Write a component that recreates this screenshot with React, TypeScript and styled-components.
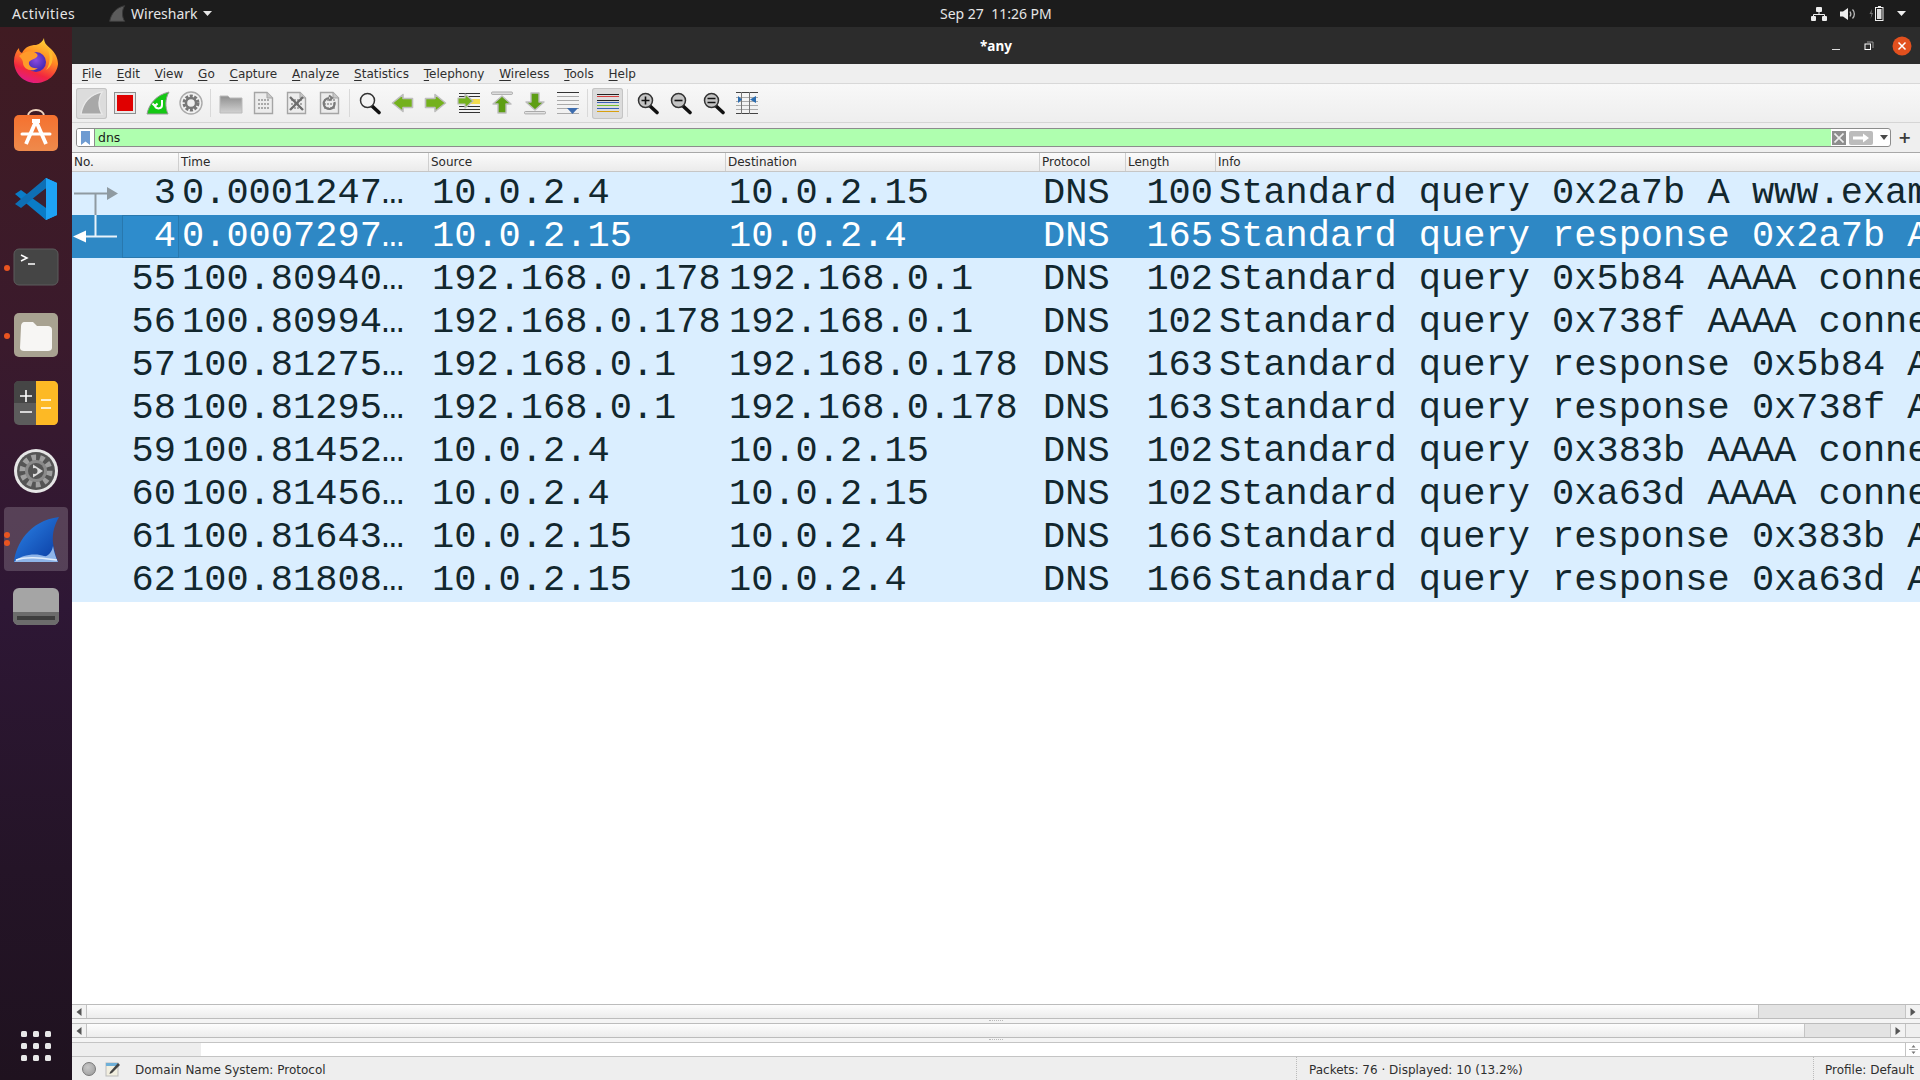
import React from "react";
import styled, { createGlobalStyle } from "styled-components";

const Global = createGlobalStyle`
  html, body { margin: 0; padding: 0; width: 1920px; height: 1080px; overflow: hidden; background: #fff; }
  * { box-sizing: border-box; }
`;
const Screen = styled.div`
  width: 1920px; height: 1080px; display: flex; flex-direction: column; overflow: hidden;
`;
const TopBar = styled.header`
  height: 27px; flex: none; background: #1c1c1c; color: #e6e6e6; display: grid; grid-template-columns: 940px auto 1fr;
  align-items: center; font: 14px "Noto Sans", sans-serif;
`;
const TopLeft = styled.div` display: flex; align-items: center; `;
const Activities = styled.span` padding-left: 12px; width: 109px; letter-spacing: .5px; `;
const AppMenu = styled.span` display: flex; align-items: center; gap: 5px; `;
const Clock = styled.span` font-size: 14px; `;
const Tray = styled.div` display: flex; justify-content: flex-end; align-items: center; gap: 13px; padding-right: 14px; `;
const Main = styled.div` flex: 1; display: flex; min-height: 0; `;
const Dock = styled.nav`
  width: 72px; flex: none; display: flex; flex-direction: column; padding-top: 2px;
  background: linear-gradient(180deg, #401b22 0%, #3a1a2c 30%, #2e1735 55%, #241427 80%, #1f121f 100%);
`;
const DockItem = styled.div<{ $active?: boolean }>`
  position: relative; height: 68px; flex: none; display: flex; align-items: center; justify-content: center;
  &::before {
    content: ""; position: absolute; left: 4px; right: 4px; top: 2px; bottom: 2px; border-radius: 4px;
    background: ${p => (p.$active ? "rgba(255,255,255,.18)" : "transparent")};
  }
  svg { position: relative; overflow: visible; }
`;
const Dot = styled.i<{ $y: number }>`
  position: absolute; left: 4px; top: ${p => p.$y}px; width: 6px; height: 6px; border-radius: 50%; background: #e95420;
`;
const DockSpacer = styled.div` flex: 1; `;
const AppGrid = styled.div`
  display: grid; grid-template-columns: repeat(3, 6px); gap: 6px; justify-content: center; padding-bottom: 19px;
  i { width: 6px; height: 6px; border-radius: 1.5px; background: #e8e8e8; }
`;
const Win = styled.main` flex: 1; min-width: 0; display: flex; flex-direction: column; background: #fff; `;
const TitleBar = styled.div`
  height: 37px; flex: none; background: #2c2c2c; color: #fff; display: grid; grid-template-columns: 1fr auto 1fr; align-items: center;
  font: bold 13.5px "Noto Sans", sans-serif;
`;
const WinButtons = styled.div` display: flex; justify-content: flex-end; align-items: center; gap: 0; padding-right: 2px; grid-column: 3; `;
const WinBtn = styled.span` width: 33px; display: flex; justify-content: center; align-items: center; `;
const Title = styled.span` grid-column: 2; `;
const MenuBar = styled.div`
  height: 20px; flex: none; background: #efefef; display: flex; padding-left: 2.5px; align-items: center;
  font: 12px "DejaVu Sans", sans-serif; color: #2e2e2e; border-bottom: 1px solid #d8d8d8;
`;
const MenuItem = styled.span`
  padding: 0 7.4px;
  u { text-underline-offset: 2px; }
`;
const Toolbar = styled.div`
  height: 39px; flex: none; display: flex; align-items: center; padding-left: 3px; background: linear-gradient(#f8f8f8, #eeeeee);
  border-bottom: 1px solid #d5d5d5;
`;
const ToolBtn = styled.span<{ $pressed?: boolean }>`
  width: 33px; height: 31px; flex: none; display: flex; justify-content: center; align-items: center; border-radius: 3px; position: relative;
  ${p => p.$pressed ? "background: #dcdcdc; box-shadow: inset 0 0 0 1px #c4c4c4; margin: 0 1px; width: 31px;" : ""}
`;
const ToolSep = styled.span` width: 7px; height: 28px; flex: none; display: flex; justify-content: center; &::before { content: ""; width: 1px; background: #d9d9d9; } `;
const FilterRow = styled.div`
  height: 30px; flex: none; background: #efefef; display: flex; align-items: center; padding: 0 10px 0 4px; gap: 7px;
  border-bottom: 1px solid #a8a8a8;
`;
const FilterBox = styled.div`
  flex: 1; height: 19px; border: 1px solid #8c8c8c; border-radius: 3px; display: flex; align-items: center; background: #fff; overflow: hidden;
`;
const Bookmark = styled.span` width: 18px; height: 100%; flex: none; display: flex; align-items: center; justify-content: center; border-right: 1px solid #8c8c8c; background:#fff; `;
const FilterInput = styled.span` flex: 1; height: 100%; background: #afffaf; color: #1b1b1b; font: 12.5px/17px "DejaVu Sans", sans-serif; padding-left: 3px; `;
const FilterTools = styled.span` width: 59px; flex: none; display: flex; align-items: center; gap: 3px; padding-left: 1px; `;
const ClearBtn = styled.span` width: 14px; height: 14px; background: #8e8e8e; display: flex; align-items: center; justify-content: center; `;
const ApplyBtn = styled.span` width: 24px; height: 14px; background: #bcbcbc; border-radius: 2px; display: flex; align-items: center; justify-content: center; `;
const Caret = styled.span` margin-left: 4px; width: 0; height: 0; border: 4px solid transparent; border-top: 5px solid #4a4a4a; border-bottom: 0; `;
const Plus = styled.span` font: bold 16px/16px "DejaVu Sans", sans-serif; color: #3c3c3c; width: 12px; text-align: center; `;
const columns = "107px 250px 297px 314px 86px 90px 1fr";
const HeaderRow = styled.div`
  height: 19px; flex: none; display: grid; grid-template-columns: ${columns}; background: linear-gradient(#fbfbfb, #ebebeb);
  border-bottom: 1px solid #c6c6c6;
  font: 12px/19px "DejaVu Sans", sans-serif; color: #2a2a2a;
`;
const HeaderCell = styled.span` padding-left: 2px; border-right: 1px solid #cfcfcf; overflow: hidden; &:last-child { border-right: 0; } `;
const List = styled.div` flex: 1; min-height: 0; background: #fff; overflow: hidden; `;
const Row = styled.div<{ $selected?: boolean }>`
  height: 43px; display: grid; grid-template-columns: ${columns}; position: relative;
  background: ${p => (p.$selected ? "#2e88c5" : "#daeeff")}; color: ${p => (p.$selected ? "#fff" : "#12272e")};
  font: 37px/43px "Liberation Mono", monospace; white-space: nowrap;
`;
const Cell = styled.span<{ $right?: boolean }>`
  padding: 0 3px; overflow: hidden; text-align: ${p => (p.$right ? "right" : "left")};
`;
const NoCell = styled(Cell)<{ $focus?: boolean }>`
  padding: 0 3px 0 3px;
  ${p => p.$focus ? "margin-left: 50px; background: #2e8ccc; box-shadow: inset 0 0 0 1px #2878ae;" : ""}
`;
const RelArrow = styled.svg` position: absolute; left: 0; top: 0; `;
const ScrollBar = styled.div`
  height: 15px; flex: none; display: flex; align-items: stretch; background: #e3e3e3; border-top: 1px solid #bcbcbc; border-bottom: 1px solid #bcbcbc;
`;
const ScrollBtn = styled.span`
  width: 15px; flex: none; background: #f2f2f2; display: flex; justify-content: center; align-items: center; border-right: 1px solid #c4c4c4;
`;
const ScrollEnd = styled(ScrollBtn)` border-right: 0; border-left: 1px solid #c4c4c4; `;
const Thumb = styled.span<{ $w: number }>`
  width: ${p => p.$w}px; flex: none; background: linear-gradient(#fdfdfd, #ececec); border-right: 1px solid #c4c4c4;
`;
const Track = styled.span` flex: 1; `;
const Corner = styled.span` width: 15px; flex: none; background: #efefef; border-left: 1px solid #c4c4c4; `;
const Splitter = styled.div` height: 4px; flex: none; background: #f4f4f4; display: flex; justify-content: center; align-items: center;
  &::before { content: ""; width: 14px; height: 1px; border-top: 1px dotted #bbb; }
`;
const ProgressRow = styled.div` height: 15px; flex: none; display: flex; border-top: 1px solid #c4c4c4; border-bottom: 1px solid #c4c4c4; background: #fff; `;
const ProgressFill = styled.span` width: 129px; background: #eeeeee; `;
const Spinner = styled.span` margin-left: auto; width: 15px; border-left: 1px solid #c4c4c4; display: flex; align-items: center; justify-content: center; `;
const StatusBar = styled.footer`
  flex: none; height: 23px; background: #eeeeee; display: flex; align-items: center; font: 12px "DejaVu Sans", sans-serif; color: #2e2e2e; padding-left: 10px;
`;
const Led = styled.span` width: 14px; height: 14px; border-radius: 50%; border: 1px solid #777; background: radial-gradient(circle at 40% 35%, #c8c8c8, #999); flex: none; `;
const EditIcon = styled.svg` margin-left: 9px; flex: none; `;
const StatusText = styled.span` margin-left: 14px; flex: 1; padding-top: 2px; `;
const StatusPackets = styled.span` width: 517px; padding-left: 12px; border-left: 1px dotted #bbb; height: 100%; line-height: 26px; `;
const StatusProfile = styled.span` width: 107px; padding-left: 11px; border-left: 1px dotted #bbb; height: 100%; line-height: 26px; `;

const rows = [
  ["3", "0.0001247…", "10.0.2.4", "10.0.2.15", "DNS", "100", "Standard query 0x2a7b A www.example.com"],
  ["4", "0.0007297…", "10.0.2.15", "10.0.2.4", "DNS", "165", "Standard query response 0x2a7b A www.example.com"],
  ["55", "100.80940…", "192.168.0.178", "192.168.0.1", "DNS", "102", "Standard query 0x5b84 AAAA connectivity-check"],
  ["56", "100.80994…", "192.168.0.178", "192.168.0.1", "DNS", "102", "Standard query 0x738f AAAA connectivity-check"],
  ["57", "100.81275…", "192.168.0.1", "192.168.0.178", "DNS", "163", "Standard query response 0x5b84 AAAA connect"],
  ["58", "100.81295…", "192.168.0.1", "192.168.0.178", "DNS", "163", "Standard query response 0x738f AAAA connect"],
  ["59", "100.81452…", "10.0.2.4", "10.0.2.15", "DNS", "102", "Standard query 0x383b AAAA connectivity-check"],
  ["60", "100.81456…", "10.0.2.4", "10.0.2.15", "DNS", "102", "Standard query 0xa63d AAAA connectivity-check"],
  ["61", "100.81643…", "10.0.2.15", "10.0.2.4", "DNS", "166", "Standard query response 0x383b AAAA connect"],
  ["62", "100.81808…", "10.0.2.15", "10.0.2.4", "DNS", "166", "Standard query response 0xa63d AAAA connect"],
];
const headers = ["No.", "Time", "Source", "Destination", "Protocol", "Length", "Info"];
const menus = ["File", "Edit", "View", "Go", "Capture", "Analyze", "Statistics", "Telephony", "Wireless", "Tools", "Help"];

const Fin = ({ s = 26, fill = "#a8a8a8", stroke = "#e8e8e8" }: { s?: number; fill?: string; stroke?: string }) => (
  <svg width={s} height={s} viewBox="0 0 26 26"><path d="M1 25 C3 14 10 4 24 1 C20 7 19 17 24 25 Z" fill={fill} stroke={stroke} strokeWidth="1.5" /></svg>
);
const Ico = ({ w = 24, h = 24, children }: { w?: number; h?: number; children: React.ReactNode }) => (
  <svg width={w} height={h} viewBox={`0 0 ${w} ${h}`}>{children}</svg>
);
const FileIco = ({ children }: { children?: React.ReactNode }) => (
  <Ico w={21} h={24}>
    <path d="M1.5 1.5H14L19.5 7V22.5H1.5Z" fill="#ececec" stroke="#a5a5a5" strokeWidth="1.4" />
    <path d="M14 1.5V7H19.5" fill="#c8c8c8" stroke="#a5a5a5" />
    {children}
  </Ico>
);
const BinaryLines = () => (
  <g stroke="#a9a9a9" strokeWidth="2" strokeDasharray="2 1">
    <path d="M5 9H16M5 13H16M5 17H16" />
  </g>
);
const ArrowIco = ({ dir }: { dir: "l" | "r" }) => (
  <Ico w={23} h={20}>
    <g transform={dir === "l" ? "translate(23 0) scale(-1 1)" : ""}>
      <path d="M1.5 5.500H11V1.500L21.500 10L11 18.500V14.500H1.5Z" fill="#74b11c" stroke="#bdbdbd" strokeWidth="1.6" strokeLinejoin="round" />
    </g>
  </Ico>
);
const Lines = ({ ys, x1 = 1, x2 = 22, c = "#555" }: { ys: number[]; x1?: number; x2?: number; c?: string }) => (
  <g stroke={c} strokeWidth="1">{ys.map(y => <path key={y} d={`M${x1} ${y}.5H${x2}`} />)}</g>
);
const Lens = ({ children, fill = "#c4c4c4" }: { children?: React.ReactNode; fill?: string }) => (
  <Ico w={22} h={24}>
    <path d="M13 15L20 21.5" stroke="#111" strokeWidth="3.6" strokeLinecap="round" />
    <circle cx="8.5" cy="9.5" r="7" fill={fill} stroke="#333" strokeWidth="1.5" />
    {children}
  </Ico>
);

const Firefox = () => (
  <svg width="46" height="46" viewBox="0 3 46 46">
    <defs>
      <linearGradient id="ffa" x1="0.7" y1="0" x2="0.3" y2="1"><stop offset="0" stopColor="#ffd93a" /><stop offset=".4" stopColor="#ff8b22" /><stop offset=".75" stopColor="#f2263f" /><stop offset="1" stopColor="#e01a8e" /></linearGradient>
      <radialGradient id="ffb" cx=".5" cy=".4"><stop offset="0" stopColor="#8b4ce0" /><stop offset="1" stopColor="#4a2bb5" /></radialGradient>
    </defs>
    <path d="M31 1C31 7 35 9 39 13C44 18 45 24 45 27C44 38 34 46 23 46C10 46 1 36 1 24C1 19 3 14 6 11C6 14 7 15 9 16C12 10 17 8 23 8C27 7 30 4 31 1Z" fill="url(#ffa)" />
    <circle cx="23" cy="25" r="10" fill="url(#ffb)" />
    <path d="M6 19C12 13 20 13 24 17C27 21 18 22 16 25C15 29 20 32 25 31C19 36 10 32 10 26C10 23 8 21 6 19Z" fill="#ff9a2a" />
    <path d="M32 8C38 14 38 27 33 33C38 30 42 23 38 13Z" fill="#ffb92e" />
  </svg>
);
const Store = () => (
  <svg width="44" height="44" viewBox="0 3 44 44">
    <defs><linearGradient id="st" x1="0" y1="0" x2="0" y2="1"><stop offset="0" stopColor="#f5712f" /><stop offset="1" stopColor="#ee8a4c" /></linearGradient></defs>
    <path d="M14 10C14 2 30 2 30 10" fill="none" stroke="#f0d6c0" strokeWidth="2" />
    <rect x="0" y="9" width="44" height="36" rx="5" fill="url(#st)" />
    <path d="M22 15L12 38M22 15L32 38M18 15H26" stroke="#fff" strokeWidth="3.8" fill="none" />
    <path d="M8 28H36" stroke="#fff" strokeWidth="3" strokeLinecap="round" />
  </svg>
);
const VSCode = () => (
  <svg width="44" height="44" viewBox="0 0 44 44">
    <path d="M32 1L12 22L32 43L43 38V6Z" fill="#1f9cf0" />
    <path d="M32 11V33L15 22Z" fill="#3c2030" />
    <path d="M7 13L1 17L32 43V31Z" fill="#0a7cc7" />
    <path d="M1 27L7 31L32 11V1Z" fill="#0e6fb5" />
    <path d="M32 1L43 6V38L32 43Z" fill="#1ea3f5" />
  </svg>
);
const Terminal = () => (
  <svg width="44" height="44" viewBox="0 0 44 44">
    <rect x="0" y="0" width="44" height="36" rx="5" transform="translate(0 4)" fill="#454545" stroke="#5c5c5c" />
    <path d="M7 10L13 13L7 16" fill="none" stroke="#fff" strokeWidth="1.5" />
    <path d="M14 19H21" stroke="#fff" strokeWidth="1.5" />
  </svg>
);
const Files = () => (
  <svg width="46" height="46" viewBox="0 0 46 46">
    <rect x="1" y="1" width="44" height="44" rx="5" fill="#a8a291" />
    <path d="M8 15C8 12 9 10 12 10H20L24 14H35C37 14 39 15 39 18V36C39 38 37 39 35 39H11C9 39 7 38 7 36Z" fill="#f7f6f4" />
  </svg>
);
const Calc = () => (
  <svg width="44" height="44" viewBox="0 0 44 44">
    <rect x="0" y="0" width="44" height="44" rx="5" fill="#5c5c5c" />
    <path d="M0 22V5C0 2 2 0 5 0H22V22Z" fill="#454545" />
    <path d="M22 0H39C42 0 44 2 44 5V39C44 42 42 44 39 44H22Z" fill="#fdb925" />
    <path d="M6 15H18M12 9V21M6 31H18M27 19H37M27 27H37" stroke="#fff" strokeWidth="1.6" />
  </svg>
);
const Settings = () => (
  <svg width="46" height="46" viewBox="0 0 46 46">
    <circle cx="23" cy="23" r="22" fill="#e6e6e6" />
    <circle cx="23" cy="23" r="19" fill="#555" />
    <circle cx="23" cy="23" r="13.5" fill="none" stroke="#a0a0a0" strokeWidth="6" strokeDasharray="4.5 3.9" />
    <circle cx="23" cy="23" r="11" fill="#8a8a8a" />
    <circle cx="23" cy="23" r="8" fill="#555" />
    <path d="M20 16.500L30 23L20 29.500Z" fill="#dcdcdc" />
    <circle cx="21.500" cy="23" r="3" fill="#555" />
  </svg>
);
const Shark = () => (
  <svg width="46" height="46" viewBox="0 0 46 46">
    <defs>
      <linearGradient id="sk" x1="0" y1="0" x2="1" y2="1"><stop offset="0" stopColor="#2c86ea" /><stop offset="1" stopColor="#0a3aa0" /></linearGradient>
    </defs>
    <path d="M1 46C3 28 16 5 46 1C42 8 39 16 40 27C41 34 43 41 45 46Z" fill="url(#sk)" />
    <path d="M1 46C8 38 24 37 31 40C35 41 39 36 40 30C41 36 43 42 45 46Z" fill="#8eb4e8" />
    <path d="M3 44C14 40 28 42 44 44" stroke="#e2edfa" strokeWidth="1.5" fill="none" />
  </svg>
);
const Disk = () => (
  <svg width="46" height="38" viewBox="0 0 46 38">
    <rect x="0" y="0" width="46" height="37" rx="6" fill="#a5a5a5" />
    <path d="M0 24H46V31C46 35 43 37 40 37H6C3 37 0 35 0 31Z" fill="#6c6c6c" />
    <rect x="4" y="28" width="38" height="4" fill="#3e3e3e" />
  </svg>
);

const App = () => (
  <Screen>
    <Global />
    <TopBar>
      <TopLeft>
        <Activities>Activities</Activities>
        <AppMenu>
          <Fin s={17} fill="#5c5c5c" stroke="#3a3a3a" />
          Wireshark
          <svg width="9" height="5"><path d="M0 0H9L4.5 5Z" fill="#e6e6e6" /></svg>
        </AppMenu>
      </TopLeft>
      <Clock>Sep 27&nbsp;&nbsp;11:26 PM</Clock>
      <Tray>
        <svg width="16" height="14" viewBox="0 0 16 14" fill="#eee">
          <rect x="5" y="0" width="6" height="5" rx="1" /><rect x="0" y="9" width="5" height="5" rx="1" /><rect x="11" y="9" width="5" height="5" rx="1" />
          <path d="M8 5V7.5M2.5 9V7.5H13.5V9" stroke="#eee" fill="none" />
        </svg>
        <svg width="16" height="14" viewBox="0 0 16 14">
          <path d="M0 4.5H3L8 1V13L3 9.5H0Z" fill="#eee" />
          <path d="M10 4.5C11 6 11 8 10 9.5M12.5 2.5C15 5 15 9 12.5 11.5" stroke="#bbb" fill="none" strokeWidth="1.3" />
        </svg>
        <svg width="15" height="15" viewBox="0 0 15 15">
          <path d="M3 3L0.5 8H2.5L1.5 13L4 7H2.5Z" fill="#777" />
          <rect x="6.500" y="1.500" width="7.500" height="13" fill="none" stroke="#eee" />
          <rect x="8" y="3" width="4.500" height="10" fill="#ddd" />
          <rect x="9" y="0" width="3" height="1.500" fill="#eee" />
        </svg>
        <svg width="9" height="5"><path d="M0 0H9L4.5 5Z" fill="#eee" /></svg>
      </Tray>
    </TopBar>
    <Main>
      <Dock>
        <DockItem><Firefox /></DockItem>
        <DockItem><Store /></DockItem>
        <DockItem><VSCode /></DockItem>
        <DockItem><Terminal /><Dot $y={32} /></DockItem>
        <DockItem><Files /><Dot $y={32} /></DockItem>
        <DockItem><Calc /></DockItem>
        <DockItem><Settings /></DockItem>
        <DockItem $active><Shark /><Dot $y={27} /><Dot $y={35} /></DockItem>
        <DockItem><Disk /></DockItem>
        <DockSpacer />
        <AppGrid>{Array.from({ length: 9 }, (_, i) => <i key={i} />)}</AppGrid>
      </Dock>
      <Win>
        <TitleBar>
          <Title>*any</Title>
          <WinButtons>
            <WinBtn><svg width="9" height="10"><path d="M1 8.5H9" stroke="#ddd" strokeWidth="1" /></svg></WinBtn>
            <WinBtn><svg width="10" height="10" viewBox="0 0 10 10"><rect x="1" y="3" width="5.5" height="5.5" fill="none" stroke="#fff" /><path d="M3 1H9V7" fill="none" stroke="#999" /></svg></WinBtn>
            <WinBtn><svg width="20" height="20" viewBox="0 0 20 20"><circle cx="10" cy="10" r="9.5" fill="#e2501e" /><path d="M6.5 6.5L13.5 13.5M13.5 6.5L6.5 13.5" stroke="#fff" strokeWidth="1.5" /></svg></WinBtn>
          </WinButtons>
        </TitleBar>
        <MenuBar>
          {menus.map(m => <MenuItem key={m}><u>{m[0]}</u>{m.slice(1)}</MenuItem>)}
        </MenuBar>
        <Toolbar>
          <ToolBtn $pressed><Fin s={24} /></ToolBtn>
          <ToolBtn><Ico w={22} h={22}><rect x=".5" y=".5" width="21" height="21" fill="#e8e8e8" stroke="#8e8e8e" /><rect x="3" y="3" width="16" height="16" fill="#e00000" /></Ico></ToolBtn>
          <ToolBtn>
            <Ico w={24} h={24}>
              <path d="M1 23C3 13 10 4 23 1C19 8 19 16 22 23Z" fill="#14c814" stroke="#999" strokeWidth="1" />
              <path d="M16 9V14C16 18.500 9 18.500 9 14M6.500 12.500L9 15L11.500 12.500" fill="none" stroke="#fff" strokeWidth="2" />
            </Ico>
          </ToolBtn>
          <ToolBtn>
            <Ico w={24} h={24}>
              <circle cx="12" cy="12" r="11" fill="#f1f1f1" stroke="#aaa" strokeWidth="1.4" />
              <circle cx="12" cy="12" r="7" fill="none" stroke="#777" strokeWidth="3" strokeDasharray="3 1.5" />
              <circle cx="12" cy="12" r="5" fill="#eee" stroke="#777" strokeWidth="2.4" />
            </Ico>
          </ToolBtn>
          <ToolSep />
          <ToolBtn>
            <svg width="24" height="21" viewBox="0 0 24 21">
              <defs><linearGradient id="fo" x1="0" y1="0" x2="0" y2="1"><stop offset="0" stopColor="#8f8f8f" /><stop offset="1" stopColor="#d2d2d2" /></linearGradient></defs>
              <path d="M1 3H9L11 5H23V20H1Z" fill="url(#fo)" stroke="#bbb" />
            </svg>
          </ToolBtn>
          <ToolBtn><FileIco><BinaryLines /></FileIco></ToolBtn>
          <ToolBtn><FileIco><BinaryLines /><path d="M4 6L17 19M17 6L4 19" stroke="#6d6d6d" strokeWidth="2.4" /></FileIco></ToolBtn>
          <ToolBtn><FileIco><BinaryLines /><path d="M15.5 11A5.5 5.5 0 1 1 10 7M10 4.5L13 7L10 9.5" fill="none" stroke="#7a7a7a" strokeWidth="2.2" /></FileIco></ToolBtn>
          <ToolSep />
          <ToolBtn><Lens fill="#f4f4f4" /></ToolBtn>
          <ToolBtn><ArrowIco dir="l" /></ToolBtn>
          <ToolBtn><ArrowIco dir="r" /></ToolBtn>
          <ToolBtn>
            <Ico w={24} h={24}>
              <Lines ys={[2, 5, 15, 18, 21]} x1={2} x2={23} c="#333" />
              <rect x="14" y="8" width="9" height="5" fill="#f3dc4e" />
              <path d="M1 7H8V3L16 10L8 17V13H1Z" fill="#74b11c" stroke="#bdbdbd" strokeWidth="1.2" strokeLinejoin="round" />
            </Ico>
          </ToolBtn>
          <ToolBtn>
            <Ico w={22} h={24}>
              <rect x="0.5" y="1" width="21" height="2.4" rx="1" fill="#e4e4e4" stroke="#999" strokeWidth=".8" />
              <path d="M11 5L20 13H15V22H7V13H2Z" fill="#5e9e14" stroke="#bdbdbd" strokeWidth="1.4" strokeLinejoin="round" />
            </Ico>
          </ToolBtn>
          <ToolBtn>
            <Ico w={22} h={24}>
              <rect x="0.5" y="20.5" width="21" height="2.4" rx="1" fill="#e4e4e4" stroke="#999" strokeWidth=".8" />
              <path d="M11 19L20 11H15V2H7V11H2Z" fill="#5e9e14" stroke="#bdbdbd" strokeWidth="1.4" strokeLinejoin="round" />
            </Ico>
          </ToolBtn>
          <ToolBtn>
            <Ico w={22} h={24}>
              <Lines ys={[1]} x1={0} x2={22} c="#333" />
              <Lines ys={[5, 9, 13, 17]} x1={0} x2={22} c="#aaa" />
              <Lines ys={[22]} x1={0} x2={22} c="#aaa" />
              <path d="M10 17H21L15.5 23Z" fill="#3c6cae" />
            </Ico>
          </ToolBtn>
          <ToolSep />
          <ToolBtn $pressed>
            <Ico w={22} h={22}>
              <Lines ys={[2]} x1={0} x2={22} c="#222" />
              <Lines ys={[4]} x1={0} x2={22} c="#d84040" />
              <Lines ys={[8]} x1={0} x2={22} c="#222" />
              <Lines ys={[10]} x1={0} x2={22} c="#3a60b8" />
              <Lines ys={[13]} x1={0} x2={22} c="#78c030" />
              <Lines ys={[16]} x1={0} x2={22} c="#3a60b8" />
              <Lines ys={[19]} x1={0} x2={22} c="#d8a010" />
            </Ico>
          </ToolBtn>
          <ToolSep />
          <ToolBtn><Lens><path d="M4.5 9.5H12.5M8.5 5.5V13.5" stroke="#111" strokeWidth="1.6" /></Lens></ToolBtn>
          <ToolBtn><Lens><path d="M4.5 9.5H12.5" stroke="#111" strokeWidth="1.6" /></Lens></ToolBtn>
          <ToolBtn><Lens><path d="M4.5 7.5H12.5M4.5 11.5H12.5" stroke="#111" strokeWidth="1.6" /></Lens></ToolBtn>
          <ToolBtn>
            <Ico w={22} h={22}>
              <Lines ys={[0, 21]} x1={0} x2={22} c="#444" />
              <Lines ys={[5, 9, 13, 17]} x1={0} x2={22} c="#aaa" />
              <path d="M5.5 0V22M13.5 0V22" stroke="#777" fill="none" />
              <path d="M2 4V11L6 7.5ZM20 4V11L14 7.5Z" fill="#2c6db0" />
            </Ico>
          </ToolBtn>
        </Toolbar>
        <FilterRow>
          <FilterBox>
            <Bookmark><svg width="9" height="14"><path d="M0 0H9V14L4.5 10.5L0 14Z" fill="#6e9bd1" /></svg></Bookmark>
            <FilterInput>dns</FilterInput>
            <FilterTools>
              <ClearBtn><svg width="10" height="10"><path d="M0.5 0.5L9.5 9.5M9.5 0.5L0.5 9.5" stroke="#eee" strokeWidth="1.6" /></svg></ClearBtn>
              <ApplyBtn><svg width="18" height="10"><path d="M1 3.5H11V0.5L17 5L11 9.5V6.5H1Z" fill="#fff" /></svg></ApplyBtn>
              <Caret />
            </FilterTools>
          </FilterBox>
          <Plus>+</Plus>
        </FilterRow>
        <HeaderRow>{headers.map(h => <HeaderCell key={h}>{h}</HeaderCell>)}</HeaderRow>
        <List>
          {rows.map((r, i) => (
            <Row key={r[0]} $selected={i === 1}>
              <NoCell $right $focus={i === 1}>{r[0]}</NoCell>
              <Cell>{r[1]}</Cell>
              <Cell>{r[2]}</Cell>
              <Cell>{r[3]}</Cell>
              <Cell>{r[4]}</Cell>
              <Cell $right>{r[5]}</Cell>
              <Cell>{r[6]}</Cell>
              {i === 0 && (
                <RelArrow width="48" height="43" viewBox="0 0 48 43">
                  <path d="M2 21.500H36M23.500 21.500V43" stroke="#8f9aa1" strokeWidth="2" fill="none" />
                  <path d="M35 15L46 21.500L35 28Z" fill="#8f9aa1" />
                </RelArrow>
              )}
              {i === 1 && (
                <RelArrow width="48" height="43" viewBox="0 0 48 43">
                  <path d="M12 21.500H45M23.500 0V21" stroke="#e8f2fa" strokeWidth="2" fill="none" />
                  <path d="M1 21.500L14 15.500V27.500Z" fill="#fff" />
                </RelArrow>
              )}
            </Row>
          ))}
        </List>
        <ScrollBar>
          <ScrollBtn><svg width="6" height="8"><path d="M5.500 0V8L0.500 4Z" fill="#555" /></svg></ScrollBtn>
          <Thumb $w={1672} />
          <Track />
          <ScrollEnd><svg width="6" height="8"><path d="M0.500 0V8L5.500 4Z" fill="#555" /></svg></ScrollEnd>
        </ScrollBar>
        <Splitter />
        <ScrollBar>
          <ScrollBtn><svg width="6" height="8"><path d="M5.500 0V8L0.500 4Z" fill="#555" /></svg></ScrollBtn>
          <Thumb $w={1718} />
          <Track />
          <ScrollEnd><svg width="6" height="8"><path d="M0.500 0V8L5.500 4Z" fill="#555" /></svg></ScrollEnd>
          <Corner />
        </ScrollBar>
        <Splitter />
        <ProgressRow>
          <ProgressFill />
          <Spinner><svg width="9" height="11"><path d="M4.500 1L6.500 3.500H2.500ZM4.500 10L6.500 7.500H2.500Z" fill="#777" /><path d="M0 5.500H9" stroke="#aaa" /></svg></Spinner>
        </ProgressRow>
        <StatusBar>
          <Led />
          <EditIcon width="16" height="16" viewBox="0 0 16 16">
            <rect x="1" y="2" width="12" height="13" fill="#f2efe0" stroke="#bbb" />
            <path d="M1 2H13V5H1Z" fill="#6fb0d8" />
            <path d="M5 11L13 2L15 4L7 12L4.500 13Z" fill="#444" />
          </EditIcon>
          <StatusText>Domain Name System: Protocol</StatusText>
          <StatusPackets>Packets: 76 · Displayed: 10 (13.2%)</StatusPackets>
          <StatusProfile>Profile: Default</StatusProfile>
        </StatusBar>
      </Win>
    </Main>
  </Screen>
);
export default App;
